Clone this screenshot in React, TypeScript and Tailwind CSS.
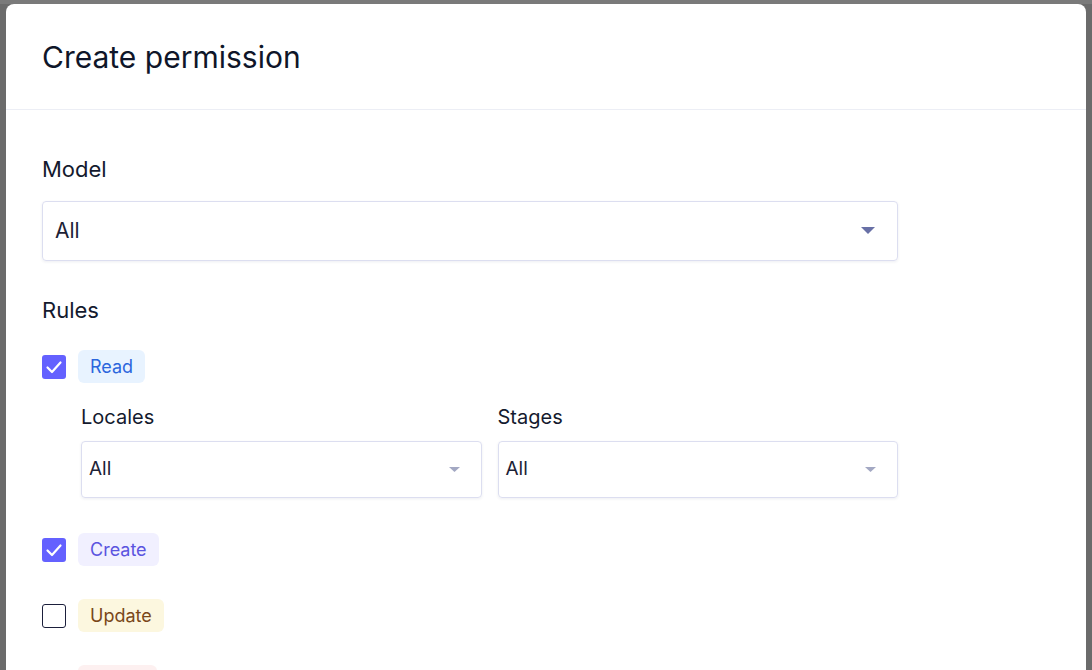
import React from "react";

function Caret({ big }: { big?: boolean }) {
  return big ? (
    <svg width="14" height="8" viewBox="0 0 14 8" className="shrink-0">
      <path d="M0 0 H14 L7 7 Z" fill="#6870a6" />
    </svg>
  ) : (
    <svg width="11" height="5" viewBox="0 0 11 5" className="shrink-0">
      <path d="M0 0 H11 L5.5 5 Z" fill="#a3a8c3" />
    </svg>
  );
}

function Check({ checked }: { checked: boolean }) {
  return checked ? (
    <div className="w-6 h-6 rounded-[3px] bg-[#6461ff] flex items-center justify-center shrink-0">
      <svg width="24" height="24" viewBox="0 0 24 24">
        <path d="M5.5 12.5 L10 17 L18.5 7.5" fill="none" stroke="white" strokeWidth="2.2" strokeLinecap="round" strokeLinejoin="round" />
      </svg>
    </div>
  ) : (
    <div className="w-6 h-6 rounded-[3px] border-[1.5px] border-[#1b1f3b] bg-white shrink-0" />
  );
}

function Rule({ checked, label, bg, color }: { checked: boolean; label: string; bg: string; color: string }) {
  return (
    <div className="flex items-center gap-3 h-[33px]">
      <Check checked={checked} />
      <span className={`px-[12px] h-[33px] flex items-center rounded-[6px] text-[18px] ${bg} ${color}`}>{label}</span>
    </div>
  );
}

export default function App() {
  return (
    <div className="w-[1092px] h-[670px] bg-[#6b6b6b] relative overflow-hidden" style={{ fontFamily: "Inter, 'Noto Sans', sans-serif" }}>
      <div className="h-[4px] bg-[#7a7a7a]" />
      <div className="absolute left-[6px] top-[4px] w-[1080px] h-[700px] bg-white rounded-t-[8px]">
        <div className="h-[106px] px-9 flex items-center border-b border-[#eceef5]">
          <h1 className="text-[30px] leading-[36px] text-[#0f1629]">Create permission</h1>
        </div>
        <div className="px-9 pt-[44px]">
          <div className="w-[856px]">
            <div className="text-[22px] leading-[30px] text-[#141a2e] mb-[17px]">Model</div>
            <div className="h-[60px] border border-[#dcdef0] rounded-[4px] shadow-[0_1px_3px_rgba(30,40,90,0.08)] flex items-center justify-between pl-[12px] pr-[22px]">
              <span className="text-[21px] text-[#1d2236]">All</span>
              <Caret big />
            </div>
            <div className="text-[22px] leading-[30px] text-[#141a2e] mt-[34px] mb-[25px]">Rules</div>
            <Rule checked label="Read" bg="bg-[#e8f3ff]" color="text-[#2b66dd]" />
            <div className="pl-[39px] mt-[21px] grid grid-cols-2 gap-4">
              <div>
                <div className="text-[20px] leading-[26px] text-[#141a2e] mb-[11px]">Locales</div>
                <div className="h-[57px] border border-[#dcdef0] rounded-[4px] shadow-[0_1px_3px_rgba(30,40,90,0.08)] flex items-center justify-between pl-[7px] pr-[21px]">
                  <span className="text-[19px] text-[#1d2236]">All</span>
                  <Caret />
                </div>
              </div>
              <div>
                <div className="text-[20px] leading-[26px] text-[#141a2e] mb-[11px]">Stages</div>
                <div className="h-[57px] border border-[#dcdef0] rounded-[4px] shadow-[0_1px_3px_rgba(30,40,90,0.08)] flex items-center justify-between pl-[7px] pr-[21px]">
                  <span className="text-[19px] text-[#1d2236]">All</span>
                  <Caret />
                </div>
              </div>
            </div>
            <div className="mt-[35px] flex flex-col gap-[33px]">
              <Rule checked label="Create" bg="bg-[#f1f0ff]" color="text-[#5b54e0]" />
              <Rule checked={false} label="Update" bg="bg-[#fcf7df]" color="text-[#7a4719]" />
              <Rule checked={false} label="Delete" bg="bg-[#fdf0f0]" color="text-[#b42424]" />
            </div>
          </div>
        </div>
      </div>
    </div>
  );
}
